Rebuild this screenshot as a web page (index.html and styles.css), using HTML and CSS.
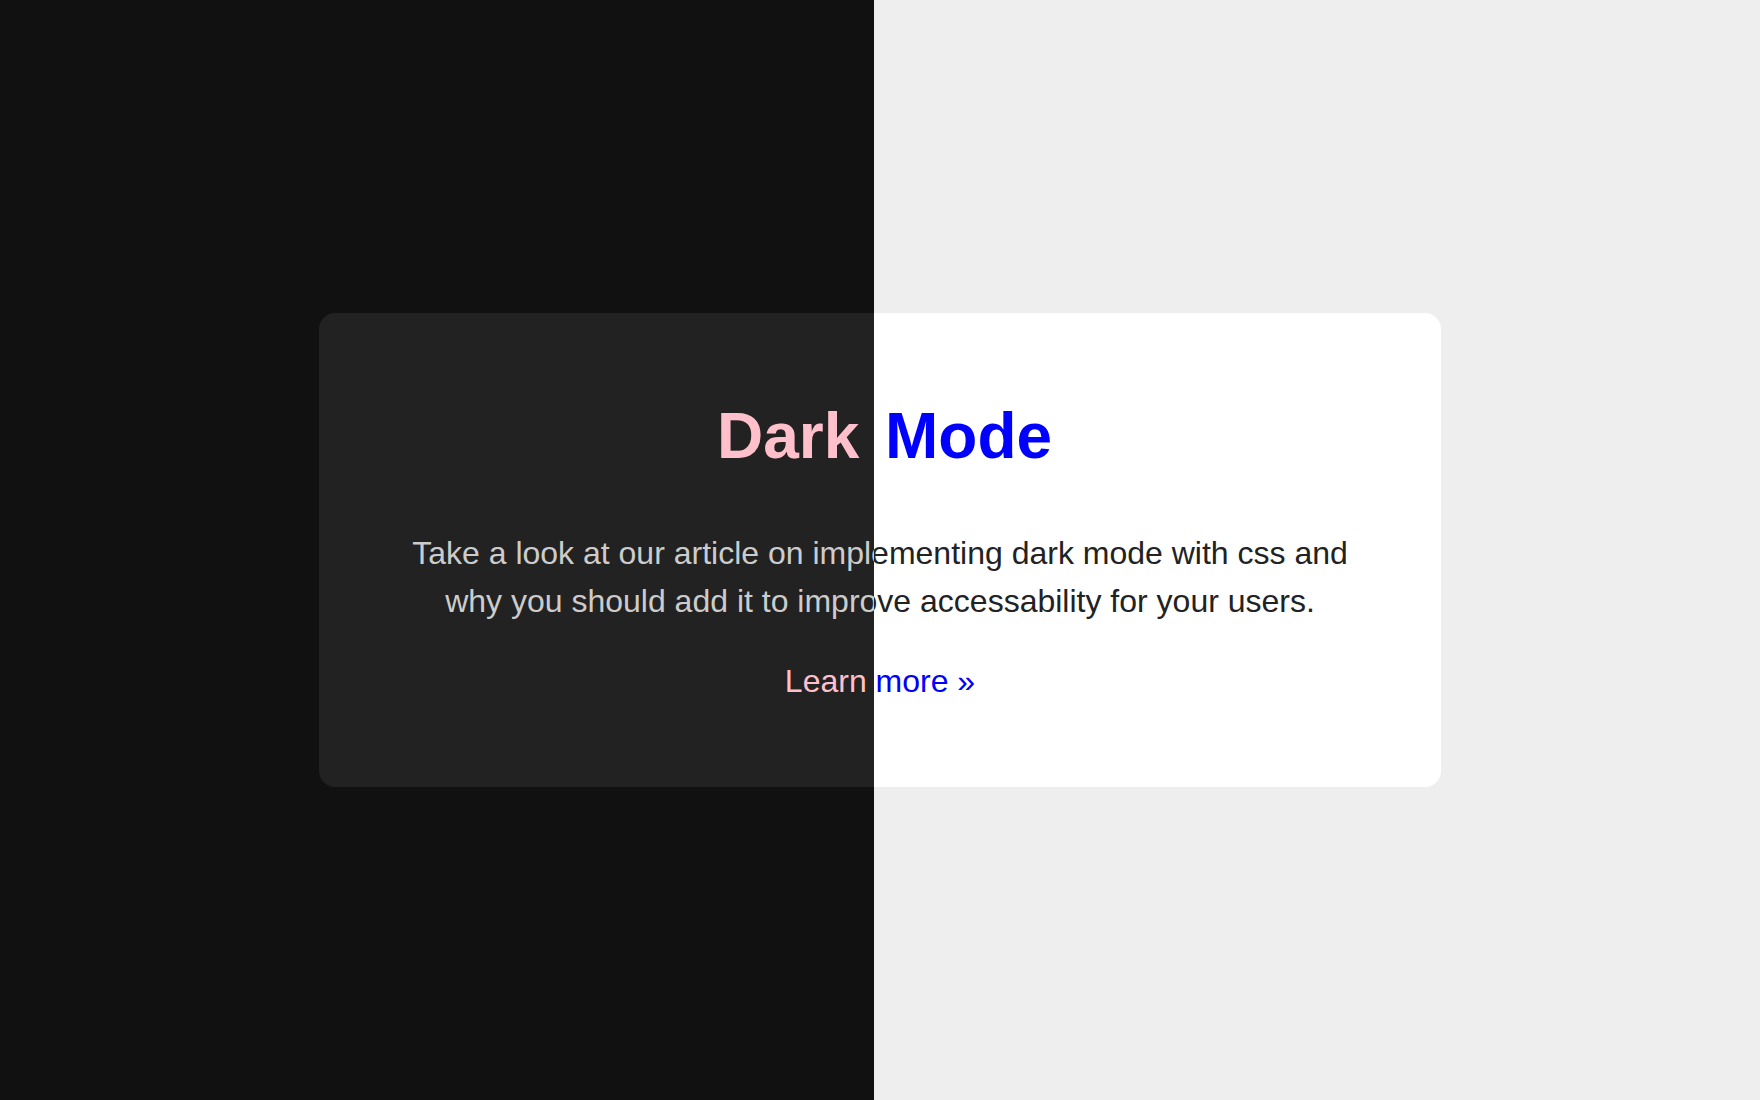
FILE: index.html
```html
<!DOCTYPE html>
<html lang="en">
<head>
  <meta charset="UTF-8" />
  <meta name="viewport" content="width=device-width, initial-scale=1.0" />
  <title>Dark Mode</title>
  <link rel="stylesheet" href="styles.css">
</head>
<body>
  <div class="stage">
    <!-- light version, full width -->
    <section class="theme theme-light">
      <div class="card">
        <h1>Dark Mode</h1>
        <p>Take a look at our article on implementing dark mode with css and why you should add it to improve accessability for your users.</p>
        <a href="#">Learn more &raquo;</a>
      </div>
    </section>

    <!-- dark version, laid over the left part -->
    <section class="theme theme-dark" aria-hidden="true">
      <div class="card">
        <h1>Dark Mode</h1>
        <p>Take a look at our article on implementing dark mode with css and why you should add it to improve accessability for your users.</p>
        <a href="#">Learn more &raquo;</a>
      </div>
    </section>
  </div>
</body>
</html>
```

FILE: styles.css
```css
* {
  box-sizing: border-box;
}

html,
body {
  margin: 0;
  height: 100%;
}

body {
  font-family: 'Liberation Sans', Arial, sans-serif;
}

.stage {
  position: relative;
  height: 100vh;
  overflow: hidden;
}

.theme {
  height: 100%;
  display: flex;
  align-items: center;
  justify-content: center;
}

.theme-light {
  background-color: #eee;
  color: #222;
}

.theme-dark {
  position: absolute;
  inset: 0;
  background-color: #111;
  color: #ccc;
  /* only the left side shows the dark theme */
  clip-path: inset(0 calc(100% - 874px) 0 0);
}

.card {
  width: 1122px;
  height: 474px;
  padding: 84px 80px 0;
  border-radius: 16px;
  display: flex;
  flex-direction: column;
  align-items: center;
  text-align: center;
}

.theme-light .card {
  background-color: #fff;
}

.theme-dark .card {
  background-color: #222;
}

h1 {
  margin: 0;
  padding-left: 9px;
  font-size: 64px;
  line-height: 78px;
  font-weight: 700;
  word-spacing: 8px;
}

p {
  margin: 54px 0 0;
  font-size: 32px;
  line-height: 48px;
}

a {
  margin-top: 32px;
  font-size: 32px;
  line-height: 48px;
  text-decoration: none;
}

.theme-light h1,
.theme-light a {
  color: #00f;
}

.theme-dark h1,
.theme-dark a {
  color: pink;
}
```
